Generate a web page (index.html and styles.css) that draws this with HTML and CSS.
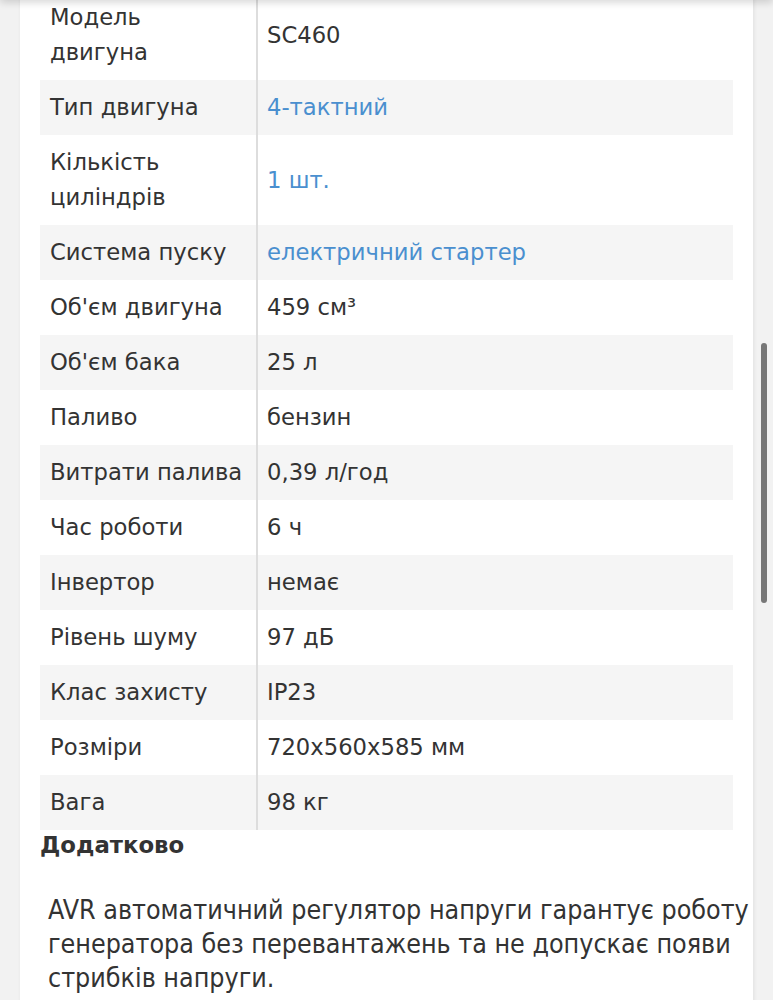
FILE: index.html
```html
<!DOCTYPE html>
<html lang="uk">
<head>
    <meta charset="UTF-8">
    <meta name="viewport" content="width=device-width, initial-scale=1.0">
    <title>Характеристики генератора</title>
    <link rel="stylesheet" href="styles.css">
</head>
<body>
    <div class="top-shadow"></div>
    <div class="scroll-thumb"></div>

    <div class="card">
        <table class="specs">
            <tr>
                <td class="name">Модель двигуна</td>
                <td class="value">SC460</td>
            </tr>
            <tr>
                <td class="name">Тип двигуна</td>
                <td class="value"><a href="#">4-тактний</a></td>
            </tr>
            <tr>
                <td class="name">Кількість циліндрів</td>
                <td class="value"><a href="#">1 шт.</a></td>
            </tr>
            <tr>
                <td class="name">Система пуску</td>
                <td class="value"><a href="#">електричний стартер</a></td>
            </tr>
            <tr>
                <td class="name">Об'єм двигуна</td>
                <td class="value">459 см³</td>
            </tr>
            <tr>
                <td class="name">Об'єм бака</td>
                <td class="value">25 л</td>
            </tr>
            <tr>
                <td class="name">Паливо</td>
                <td class="value">бензин</td>
            </tr>
            <tr>
                <td class="name">Витрати палива</td>
                <td class="value">0,39 л/год</td>
            </tr>
            <tr>
                <td class="name">Час роботи</td>
                <td class="value">6 ч</td>
            </tr>
            <tr>
                <td class="name">Інвертор</td>
                <td class="value">немає</td>
            </tr>
            <tr>
                <td class="name">Рівень шуму</td>
                <td class="value">97 дБ</td>
            </tr>
            <tr>
                <td class="name">Клас захисту</td>
                <td class="value">IP23</td>
            </tr>
            <tr>
                <td class="name">Розміри</td>
                <td class="value">720x560x585 мм</td>
            </tr>
            <tr>
                <td class="name">Вага</td>
                <td class="value">98 кг</td>
            </tr>
        </table>

        <h3 class="extra-title">Додатково</h3>

        <p class="extra-text">AVR автоматичний регулятор напруги гарантує роботу генератора без перевантажень та не допускає появи стрибків напруги.</p>
    </div>
</body>
</html>
```

FILE: styles.css
```css
body {
    margin: 0;
    background: #f2f2f2;
    font-family: "DejaVu Sans", Verdana, sans-serif;
    color: #333;
}
.top-shadow {
    position: fixed;
    top: -10px;
    left: 0;
    right: 0;
    height: 10px;
    box-shadow: 0 2px 8px rgba(0, 0, 0, 0.18);
}
.scroll-thumb {
    position: fixed;
    top: 343px;
    right: 6px;
    width: 6px;
    height: 260px;
    border-radius: 3px;
    background: #777;
}
.card {
    margin: -10px 0 0 20px;
    width: 693px;
    padding: 0 20px 40px 20px;
    background: #fff;
    box-shadow: 1px 0 4px rgba(0, 0, 0, 0.08);
}
.specs {
    width: 100%;
    border-collapse: collapse;
    font-size: 22.7px;
    line-height: 35px;
}
.specs tr:nth-child(even) {
    background: #f5f5f5;
}
.specs td {
    padding: 10px;
    vertical-align: middle;
}
.specs .name {
    width: 193px;
    padding-right: 13px;
    border-right: 2px solid #ddd;
}
.specs .value {
    padding-left: 9px;
}
.value a {
    color: #4a8fcf;
    text-decoration: none;
}
.extra-title {
    margin: 0;
    font-size: 22.8px;
    line-height: 30px;
    font-weight: bold;
    color: #333;
}
.extra-text {
    margin: 33px -20px 0 8px;
    font-family: "DejaVu Sans Condensed", "Liberation Sans Narrow", sans-serif;
    font-size: 26.6px;
    line-height: 34px;
}
```
